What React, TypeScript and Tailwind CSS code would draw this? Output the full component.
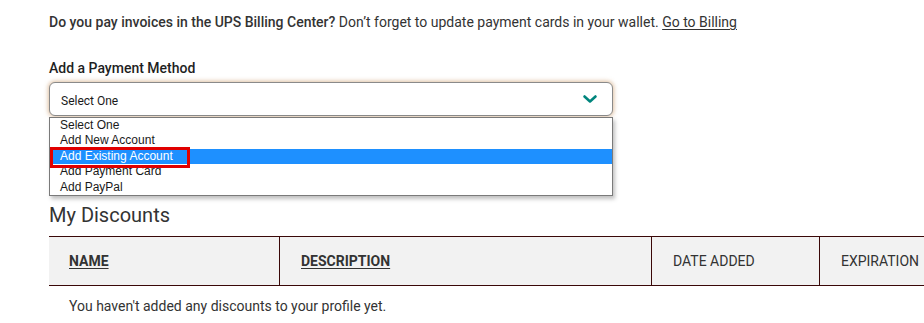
import React from "react";

const options = ["Select One", "Add New Account", "Add Existing Account", "Add Payment Card", "Add PayPal"];

export default function App() {
  return (
    <div className="w-[924px] h-[323px] overflow-hidden bg-white text-[#333333]" style={{ fontFamily: "Roboto, 'Liberation Sans', sans-serif" }}>
      <div className="pl-[49px] pt-[12px]">
        <p className="text-[14px] leading-[20px] whitespace-nowrap">
          <span className="font-medium">Do you pay invoices in the UPS Billing Center?</span> Don’t forget to update payment cards in your wallet.{" "}
          <a className="underline underline-offset-2">Go to Billing</a>
        </p>
        <div className="mt-[26px] text-[14px] leading-[20px] font-medium text-[#1f1f1f]">Add a Payment Method</div>
        <div className="relative mt-[4px] w-[564px]">
          <div className="h-[34px] rounded-[6px] border border-[#8a8a8a] bg-white shadow-[0_0_4px_1px_rgba(200,150,100,0.6)] flex items-center justify-between pl-[11px] pr-[14px]">
            <span className="text-[12px] text-[#1a1a1a] mt-[3px]">Select One</span>
            <svg width="16" height="10" viewBox="0 0 16 10">
              <path d="M2.5 2.5 L8 7.5 L13.5 2.5" fill="none" stroke="#00857d" strokeWidth="2.6" strokeLinecap="round" strokeLinejoin="round" />
            </svg>
          </div>
          <div className="absolute left-0 top-[35px] w-[564px] border border-[#7a7a7a] bg-white shadow-[2px_3px_4px_rgba(0,0,0,0.25)] z-10" style={{ fontFamily: "'Liberation Sans', Arial, sans-serif" }}>
            {options.map((o) => (
              <div
                key={o}
                className={
                  "h-[15.4px] text-[12px] leading-[15.4px] pl-[10px] " +
                  (o === "Add Existing Account" ? "bg-[#1e90ff] text-white" : "text-[#1a1a1a]")
                }
              >
                {o}
              </div>
            ))}
            <div className="absolute left-0 top-[29px] w-[140px] h-[21px] border-[3px] border-[#e00000]" />
          </div>
        </div>
        <h2 className="mt-[85px] text-[20px] leading-[28px] text-[#333333]">My Discounts</h2>
        <div className="mt-[7px] w-[1000px]">
          <div className="flex h-[50px] bg-[#f2f2f2] border-y border-[#3a0808] text-[14px]">
            <div className="w-[230px] flex items-center pl-[20px] font-bold underline underline-offset-2">NAME</div>
            <div className="w-[372px] flex items-center pl-[21px] border-l border-[#3a0808] font-bold underline underline-offset-2">DESCRIPTION</div>
            <div className="w-[168px] flex items-center pl-[21px] border-l border-[#3a0808]">DATE ADDED</div>
            <div className="w-[200px] flex items-center pl-[21px] border-l border-[#3a0808]">EXPIRATION</div>
          </div>
          <div className="pl-[20px] pt-[10px] text-[14px] leading-[20px]">You haven't added any discounts to your profile yet.</div>
        </div>
      </div>
    </div>
  );
}
